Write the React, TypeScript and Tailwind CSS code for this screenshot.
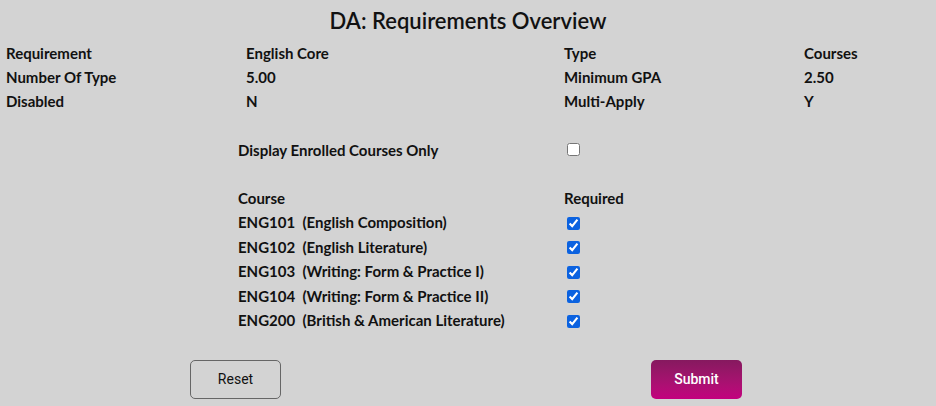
import React from 'react';

const summary = [
  ['Requirement', 'English Core', 'Type', 'Courses'],
  ['Number Of Type', '5.00', 'Minimum GPA', '2.50'],
  ['Disabled', 'N', 'Multi-Apply', 'Y'],
];

const courses = [
  'ENG101\u00a0 (English Composition)',
  'ENG102\u00a0 (English Literature)',
  'ENG103\u00a0 (Writing: Form & Practice I)',
  'ENG104\u00a0 (Writing: Form & Practice II)',
  'ENG200\u00a0 (British & American Literature)',
];

const App: React.FC = () => {
  return (
    <div className="w-[936px] h-[406px] bg-[#d3d3d3] text-[#111] font-['Lato','Liberation_Sans',sans-serif] overflow-hidden">
      <h1 className="text-center text-[22px] font-semibold leading-[26px] pt-[8px] text-[#111]">
        DA: Requirements Overview
      </h1>

      <div className="mt-[7px] pl-[6px] grid grid-cols-[240px_318px_240px_1fr] text-[15px] font-bold">
        {summary.map((row, i) =>
          row.map((cell, j) => (
            <div key={`${i}-${j}`} className="h-[24px] leading-[24px]">
              {cell}
            </div>
          ))
        )}
      </div>

      <div className="ml-[238px] mt-[26px] grid grid-cols-[326px_1fr] text-[15px] font-bold">
        <div className="h-[24px] leading-[22px]">Display Enrolled Courses Only</div>
        <div className="h-[24px] flex items-center pl-[3px] pb-[4px]">
          <input type="checkbox" className="w-[13px] h-[13px] m-0" />
        </div>
      </div>

      <div className="ml-[238px] mt-[23px] grid grid-cols-[326px_1fr] text-[15px] font-bold">
        <div className="h-[24px] leading-[24px]">Course</div>
        <div className="h-[24px] leading-[24px]">Required</div>
        {courses.map((c) => (
          <React.Fragment key={c}>
            <div className="h-[24.5px] leading-[24.5px]">{c}</div>
            <div className="h-[24.5px] flex items-center pl-[3px] pt-[2px]">
              <input type="checkbox" defaultChecked className="w-[13px] h-[13px] m-0 accent-[#0b62e0]" />
            </div>
          </React.Fragment>
        ))}
      </div>

      <div className="mt-[27px] ml-[190px] flex gap-[370px] font-['Roboto','Liberation_Sans',sans-serif] text-[14px]">
        <button className="w-[91px] h-[39px] rounded-[5px] border border-[#666] text-[#111] bg-transparent">
          Reset
        </button>
        <button className="w-[91px] h-[39px] rounded-[5px] text-white font-medium bg-gradient-to-b from-[#86195f] to-[#c3007e]">
          Submit
        </button>
      </div>
    </div>
  );
};

export default App;
